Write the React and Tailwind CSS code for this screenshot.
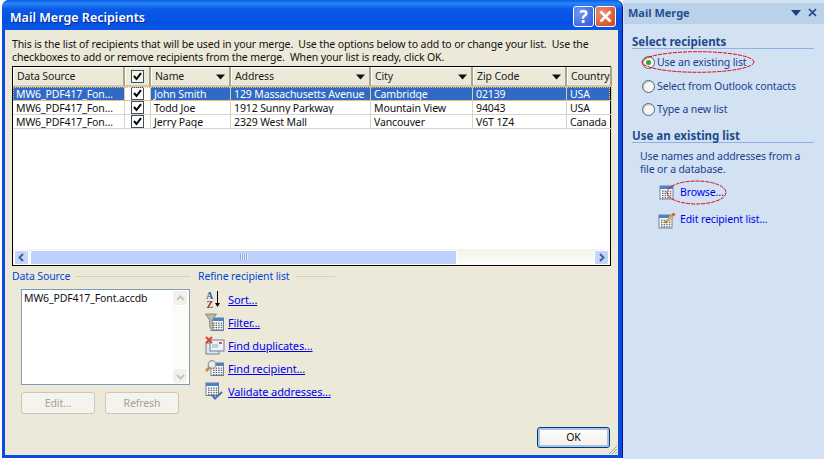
import React from "react";

const cols = ["w-[112px]", "w-[26px]", "w-[80px]", "w-[140px]", "w-[102px]", "w-[94px]", "w-[45px]"];

function Arrow() {
  return (
    <svg width="11" height="6" viewBox="0 0 11 6" className="absolute right-[3px] top-[7px]">
      <path d="M1 0.5h9L5.5 5.5z" fill="#111" />
    </svg>
  );
}

function Check({ header }) {
  return (
    <span className={`flex h-[13px] w-[13px] items-center justify-center border-[1px] border-[#3c4f5f] ${header ? "bg-[#f5f4ea]" : "bg-white"}`}>
      <svg width="9" height="9" viewBox="0 0 9 9">
        <path d="M1 4l2.5 3L8 1.2" fill="none" stroke="#000" strokeWidth="2" />
      </svg>
    </span>
  );
}

function HeaderCell({ w, children, arrow, center }) {
  return (
    <div className={`relative ${w} flex h-[20px] shrink-0 items-center border-r-2 border-r-[#a8a490] border-b-2 border-b-[#cdc9b5] bg-[#ece9d8] shadow-[inset_1px_1px_0_#ffffff] ${center ? "justify-center" : "pl-[4px]"} text-[#1b1b1b]`}>
      {children}
      {arrow && <Arrow />}
    </div>
  );
}

function Row({ cells, selected }) {
  return (
    <div className={`flex h-[14px] ${selected ? "bg-[#316ac5] text-white outline-1 -outline-offset-1 outline-dotted outline-[#e8b860]" : "text-[#111]"}`}>
      {cells.map((c, i) => (
        <div key={i} className={`${cols[i]} flex shrink-0 items-center overflow-hidden whitespace-nowrap border-r border-b ${selected ? "border-[#d9c9a0]" : "border-[#d8d4c8]"} ${i === 1 ? "justify-center bg-white" : "pt-[2px] pl-[3px]"}`}>
          {i === 1 ? <Check /> : c}
        </div>
      ))}
    </div>
  );
}

function ScrollBtn({ d, light, size = "w-[15px] h-[15px]" }) {
  return (
    <span className={`flex ${size} shrink-0 items-center justify-center rounded-[2px] border border-white ${light ? "bg-[#f3f2ea]" : "bg-[#c3d4fd]"}`}>
      <svg width="9" height="9" viewBox="0 0 9 9">
        <path d={d} fill="none" stroke={light ? "#c5c4b8" : "#4d6185"} strokeWidth="2" />
      </svg>
    </span>
  );
}

function Grid({ x = 0, y = 0, s = 13 }) {
  const dots = [];
  for (let r = 0; r < 4; r++) for (let c = 0; c < 4; c++) dots.push(<rect key={r + "-" + c} x={x + 2 + c * 2.6} y={y + 4.5 + r * 2.2} width="1.5" height="1.3" fill="#5b6478" />);
  return (
    <g>
      <rect x={x} y={y} width={s} height={s} fill="#fdfdf6" stroke="#6e7f9c" strokeWidth="1" />
      <rect x={x} y={y} width={s} height="3" fill="#4f81c7" />
      {dots}
    </g>
  );
}

function IconSort() {
  return (
    <svg width="20" height="20" viewBox="0 0 20 20">
      <text x="1" y="8.5" fontSize="10" fontWeight="700" fontFamily="Liberation Serif, serif" fill="#2f5aa8">A</text>
      <text x="1.5" y="18" fontSize="10" fontWeight="700" fontFamily="Liberation Serif, serif" fill="#8a3a3a">Z</text>
      <path d="M12.5 1v14" stroke="#000" strokeWidth="1" />
      <path d="M10 13l2.5 4 2.5-4z" fill="#000" />
    </svg>
  );
}
function IconFilter() {
  return (
    <svg width="20" height="20" viewBox="0 0 20 20">
      <Grid x={6} y={5} s={12.5} />
      <path d="M0.5 1h11L7.5 7v9l-3-2V7z" fill="#b9b9ae" stroke="#77776e" strokeWidth="0.7" />
    </svg>
  );
}
function IconDup() {
  return (
    <svg width="20" height="20" viewBox="0 0 20 20">
      <rect x="1" y="7" width="13" height="11" fill="#dfe6f2" stroke="#6e7f9c" />
      <rect x="5" y="4" width="14" height="11" fill="#eef2f8" stroke="#6e7f9c" />
      <path d="M7 9h6M7 11h6" stroke="#96a6c0" />
      <rect x="14" y="6" width="3" height="2" fill="#d05a3a" />
      <path d="M1 1l6 6M7 1L1 7" stroke="#e0432b" strokeWidth="2" />
    </svg>
  );
}
function IconFind() {
  return (
    <svg width="20" height="20" viewBox="0 0 20 20">
      <Grid x={6} y={4} s={12.5} />
      <circle cx="7" cy="5.5" r="3.8" fill="#e8edf4" stroke="#9a9a90" strokeWidth="1.2" />
      <path d="M4.5 8.5L1 12" stroke="#c98b3a" strokeWidth="2.6" />
    </svg>
  );
}
function IconValidate() {
  return (
    <svg width="20" height="20" viewBox="0 0 20 20">
      <Grid x={1} y={1} s={12.5} />
      <path d="M7 13l3 3.5L17 10" fill="none" stroke="#4a6fc0" strokeWidth="2" />
    </svg>
  );
}
function IconBrowse() {
  return (
    <svg width="16" height="16" viewBox="0 0 16 16">
      <Grid x={1} y={1} s={13} />
    </svg>
  );
}
function IconEdit() {
  return (
    <svg width="18" height="18" viewBox="0 0 18 18">
      <Grid x={1} y={4} s={13} />
      <path d="M7 12l9-9" stroke="#d9b45a" strokeWidth="3" />
      <path d="M14.5 4.5l2-2" stroke="#c0604a" strokeWidth="3" />
      <path d="M7 12l1-2 1 1z" fill="#222" />
    </svg>
  );
}

function Legend({ children, line }) {
  return (
    <div className="flex h-[14px] items-center text-[#0046d5]">
      <span className="whitespace-nowrap">{children}</span>
      <span className={`ml-[6px] h-[1px] ${line} bg-[#d0d0bf]`} />
    </div>
  );
}

function RefineLink({ icon, children }) {
  return (
    <div className="flex h-[23px] items-center">
      <span className="flex w-[22px] shrink-0 items-center">{icon}</span>
      <span className="ml-[1px] text-[11px] text-[#0000ee] underline">{children}</span>
    </div>
  );
}

function Radio({ on, children }) {
  return (
    <div className="flex h-[23.5px] items-center pl-[10px] text-[#1b3f8f]">
      <span className="flex h-[13px] w-[13px] shrink-0 items-center justify-center rounded-full border border-[#4e6785] bg-[#f6f6f2] shadow-[inset_1px_1px_1px_#c8c8c0]">
        {on && <span className="h-[5px] w-[5px] rounded-full bg-[#2da72d]" />}
      </span>
      <span className="ml-[2px]">{children}</span>
    </div>
  );
}

function SectionHead({ children }) {
  return (
    <div className="h-[13px] border-b border-[#8fb2e3] text-[11.5px] leading-[12px] font-bold tracking-normal text-[#234a8a]">{children}</div>
  );
}

export default function App() {
  return (
    <div className="relative flex h-[459px] w-[824px] overflow-hidden bg-white font-['Noto_Sans',sans-serif] text-[10.5px] leading-[13px] tracking-[-0.12px]">
      {/* Dialog */}
      <div className="ml-[2px] flex h-[458px] w-[621px] shrink-0 flex-col rounded-t-[7px] border-r border-r-[#00138c] bg-[#0a4ce0] pr-[4px] pb-[3px] pl-[3px]">
        <div className="-mx-[3px] -mr-[4px] flex h-[30px] shrink-0 items-center justify-between rounded-t-[7px] bg-[linear-gradient(180deg,#0a5ce6_0%,#2a86f5_12%,#0a5ae8_30%,#0350e0_75%,#0a58ea_100%)] pt-[3px] pr-[6px] pl-[8px]">
          <span className="mt-[1px] text-[12.5px] font-semibold tracking-normal text-white [text-shadow:1px_1px_#0b2a90]">Mail Merge Recipients</span>
          <div className="flex gap-[1px]">
            <span className="flex h-[21px] w-[21px] items-center justify-center rounded-[3px] border border-white bg-[radial-gradient(circle_at_30%_30%,#6f9af5,#2f55d8)] text-[17px] leading-none font-bold text-white">?</span>
            <span className="flex h-[21px] w-[21px] items-center justify-center rounded-[3px] border border-white bg-[radial-gradient(circle_at_30%_30%,#ee9070,#d0401c)]">
              <svg width="13" height="13" viewBox="0 0 13 13"><path d="M1.5 1.5l10 10M11.5 1.5l-10 10" stroke="#fff" strokeWidth="2.6" /></svg>
            </span>
          </div>
        </div>

        <div className="flex min-h-0 flex-1 flex-col bg-[#ece9d8] pt-[8px] pr-[7px] pl-[7px] text-[#111]">
          <p className="h-[28px] leading-[13px] whitespace-nowrap">
            This is the list of recipients that will be used in your merge.&nbsp; Use the options below to add to or change your list.&nbsp; Use the
            <br />
            checkboxes to add or remove recipients from the merge.&nbsp; When your list is ready, click OK.
          </p>

          {/* Table */}
          <div className="flex h-[200px] shrink-0 flex-col border border-black bg-white">
            <div className="flex">
              <HeaderCell w={cols[0]}>Data Source</HeaderCell>
              <HeaderCell w={cols[1]} center><Check header /></HeaderCell>
              <HeaderCell w={cols[2]} arrow>Name</HeaderCell>
              <HeaderCell w={cols[3]} arrow>Address</HeaderCell>
              <HeaderCell w={cols[4]} arrow>City</HeaderCell>
              <HeaderCell w={cols[5]} arrow>Zip Code</HeaderCell>
              <HeaderCell w={cols[6]}>Country</HeaderCell>
            </div>
            <Row selected cells={["MW6_PDF417_Fon…", "", "John Smith", "129 Massachusetts Avenue", "Cambridge", "02139", "USA"]} />
            <Row cells={["MW6_PDF417_Fon…", "", "Todd Joe", "1912 Sunny Parkway", "Mountain View", "94043", "USA"]} />
            <Row cells={["MW6_PDF417_Fon…", "", "Jerry Page", "2329 West Mall", "Vancouver", "V6T 1Z4", "Canada"]} />
            <div className="flex-1" />
            <div className="flex h-[16px] shrink-0 items-center bg-[linear-gradient(180deg,#f3f2ec,#fdfdf9)] px-[1px]">
              <ScrollBtn d="M6 1L2.5 4.5 6 8" />
              <div className="ml-[1px] flex h-[15px] w-[427px] items-center justify-center rounded-[2px] border border-white bg-[#bdd0fb]">
                <span className="h-[6px] w-[8px] bg-[repeating-linear-gradient(90deg,#8fa8e0_0_1px,#e6edff_1px_2px)]" />
              </div>
              <div className="flex-1" />
              <ScrollBtn d="M3 1l3.5 3.5L3 8" />
            </div>
          </div>

          {/* Lower */}
          <div className="mt-[3px] flex min-h-0 flex-1">
            <div className="w-[186px] shrink-0">
              <Legend line="w-[114px]">Data Source</Legend>
              <div className="mt-[6px] ml-[9px] flex h-[96px] w-[169px] border border-[#7f9db9] bg-white">
                <div className="flex-1 pt-[2px] pl-[2px] whitespace-nowrap">MW6_PDF417_Font.accdb</div>
                <div className="flex w-[17px] flex-col justify-between bg-[#fbfbf8]">
                  <ScrollBtn light size="w-[16px] h-[16px]" d="M1 6l3.5-3.5L8 6" />
                  <ScrollBtn light size="w-[16px] h-[16px]" d="M1 3l3.5 3.5L8 3" />
                </div>
              </div>
              <div className="mt-[7px] ml-[9px] flex gap-[10px]">
                <span className="flex h-[22px] w-[74px] items-center justify-center rounded-[3px] border border-[#c9c7ba] bg-[#f4f3ee] text-[#a3a195]">Edit...</span>
                <span className="flex h-[22px] w-[74px] items-center justify-center rounded-[3px] border border-[#c9c7ba] bg-[#f4f3ee] text-[#a3a195]">Refresh</span>
              </div>
            </div>
            <div className="flex-1">
              <Legend line="w-[39px]">Refine recipient list</Legend>
              <div className="mt-[5px] ml-[7px] flex flex-col">
                <RefineLink icon={<IconSort />}>Sort...</RefineLink>
                <RefineLink icon={<IconFilter />}>Filter...</RefineLink>
                <RefineLink icon={<IconDup />}>Find duplicates...</RefineLink>
                <RefineLink icon={<IconFind />}>Find recipient...</RefineLink>
                <RefineLink icon={<IconValidate />}>Validate addresses...</RefineLink>
              </div>
              <div className="mt-[24px] mr-[1px] flex justify-end">
                <span className="flex h-[21px] w-[73px] items-center justify-center rounded-[3px] border border-[#003c74] bg-[linear-gradient(180deg,#ffffff,#f0efe6)] text-[#111] shadow-[inset_0_0_0_2px_#a8c0ec]">OK</span>
              </div>
            </div>
          </div>
        </div>
      </div>

      {/* Task pane */}
      <div className="flex min-w-0 flex-1 flex-col bg-[#d2e2f3] pl-[1px]">
        <div className="mt-[3px] flex h-[21px] shrink-0 items-center justify-between bg-[#bad1ea] pr-[7px] pb-[2px] pl-[4px]">
          <span className="text-[11px] font-bold tracking-normal text-[#264f8f]">Mail Merge</span>
          <div className="flex items-center gap-[7px]">
            <svg width="10" height="6" viewBox="0 0 10 6"><path d="M0 0h10L5 6z" fill="#1e3f85" /></svg>
            <svg width="9" height="9" viewBox="0 0 9 9"><path d="M1 1l7 7M8 1L1 8" stroke="#1e3f85" strokeWidth="1.6" /></svg>
          </div>
        </div>
        <div className="flex flex-col px-[8px] pt-[12px] pr-[10px]">
          <SectionHead>Select recipients</SectionHead>
          <div className="mt-[2px]">
            <Radio on>Use an existing list</Radio>
            <Radio>Select from Outlook contacts</Radio>
            <Radio>Type a new list</Radio>
          </div>
          <div className="mt-[8.5px]"><SectionHead>Use an existing list</SectionHead></div>
          <p className="mt-[7px] pl-[8px] text-[#1b3f8f]">
            Use names and addresses from a
            <br />
            file or a database.
          </p>
          <div className="mt-[3px] flex h-[27px] items-center pl-[27px]">
            <IconBrowse />
            <span className="ml-[5px] text-[#0000ee]">Browse...</span>
          </div>
          <div className="flex h-[27px] items-center pl-[26px]">
            <IconEdit />
            <span className="ml-[4px] text-[#0000ee]">Edit recipient list...</span>
          </div>
        </div>
      </div>

      {/* Hand-drawn red ellipses over the pane */}
      <svg className="pointer-events-none absolute top-[51px] left-[641px]" width="114" height="22" viewBox="0 0 114 22">
        <ellipse cx="57" cy="11" rx="56" ry="10.3" fill="none" stroke="#e60012" strokeWidth="1" strokeDasharray="4 1" />
      </svg>
      <svg className="pointer-events-none absolute top-[180px] left-[666px]" width="61" height="25" viewBox="0 0 61 25">
        <ellipse cx="30.5" cy="12.5" rx="29.5" ry="11.5" fill="none" stroke="#e60012" strokeWidth="1" strokeDasharray="4 1" />
      </svg>
      {/* Resize grip */}
      <svg className="pointer-events-none absolute top-[445px] left-[608px]" width="10" height="10" viewBox="0 0 10 10">
        <path d="M9 1L1 9M9 4L4 9M9 7L7 9" stroke="#a8a594" strokeWidth="1" />
      </svg>
    </div>
  );
}
